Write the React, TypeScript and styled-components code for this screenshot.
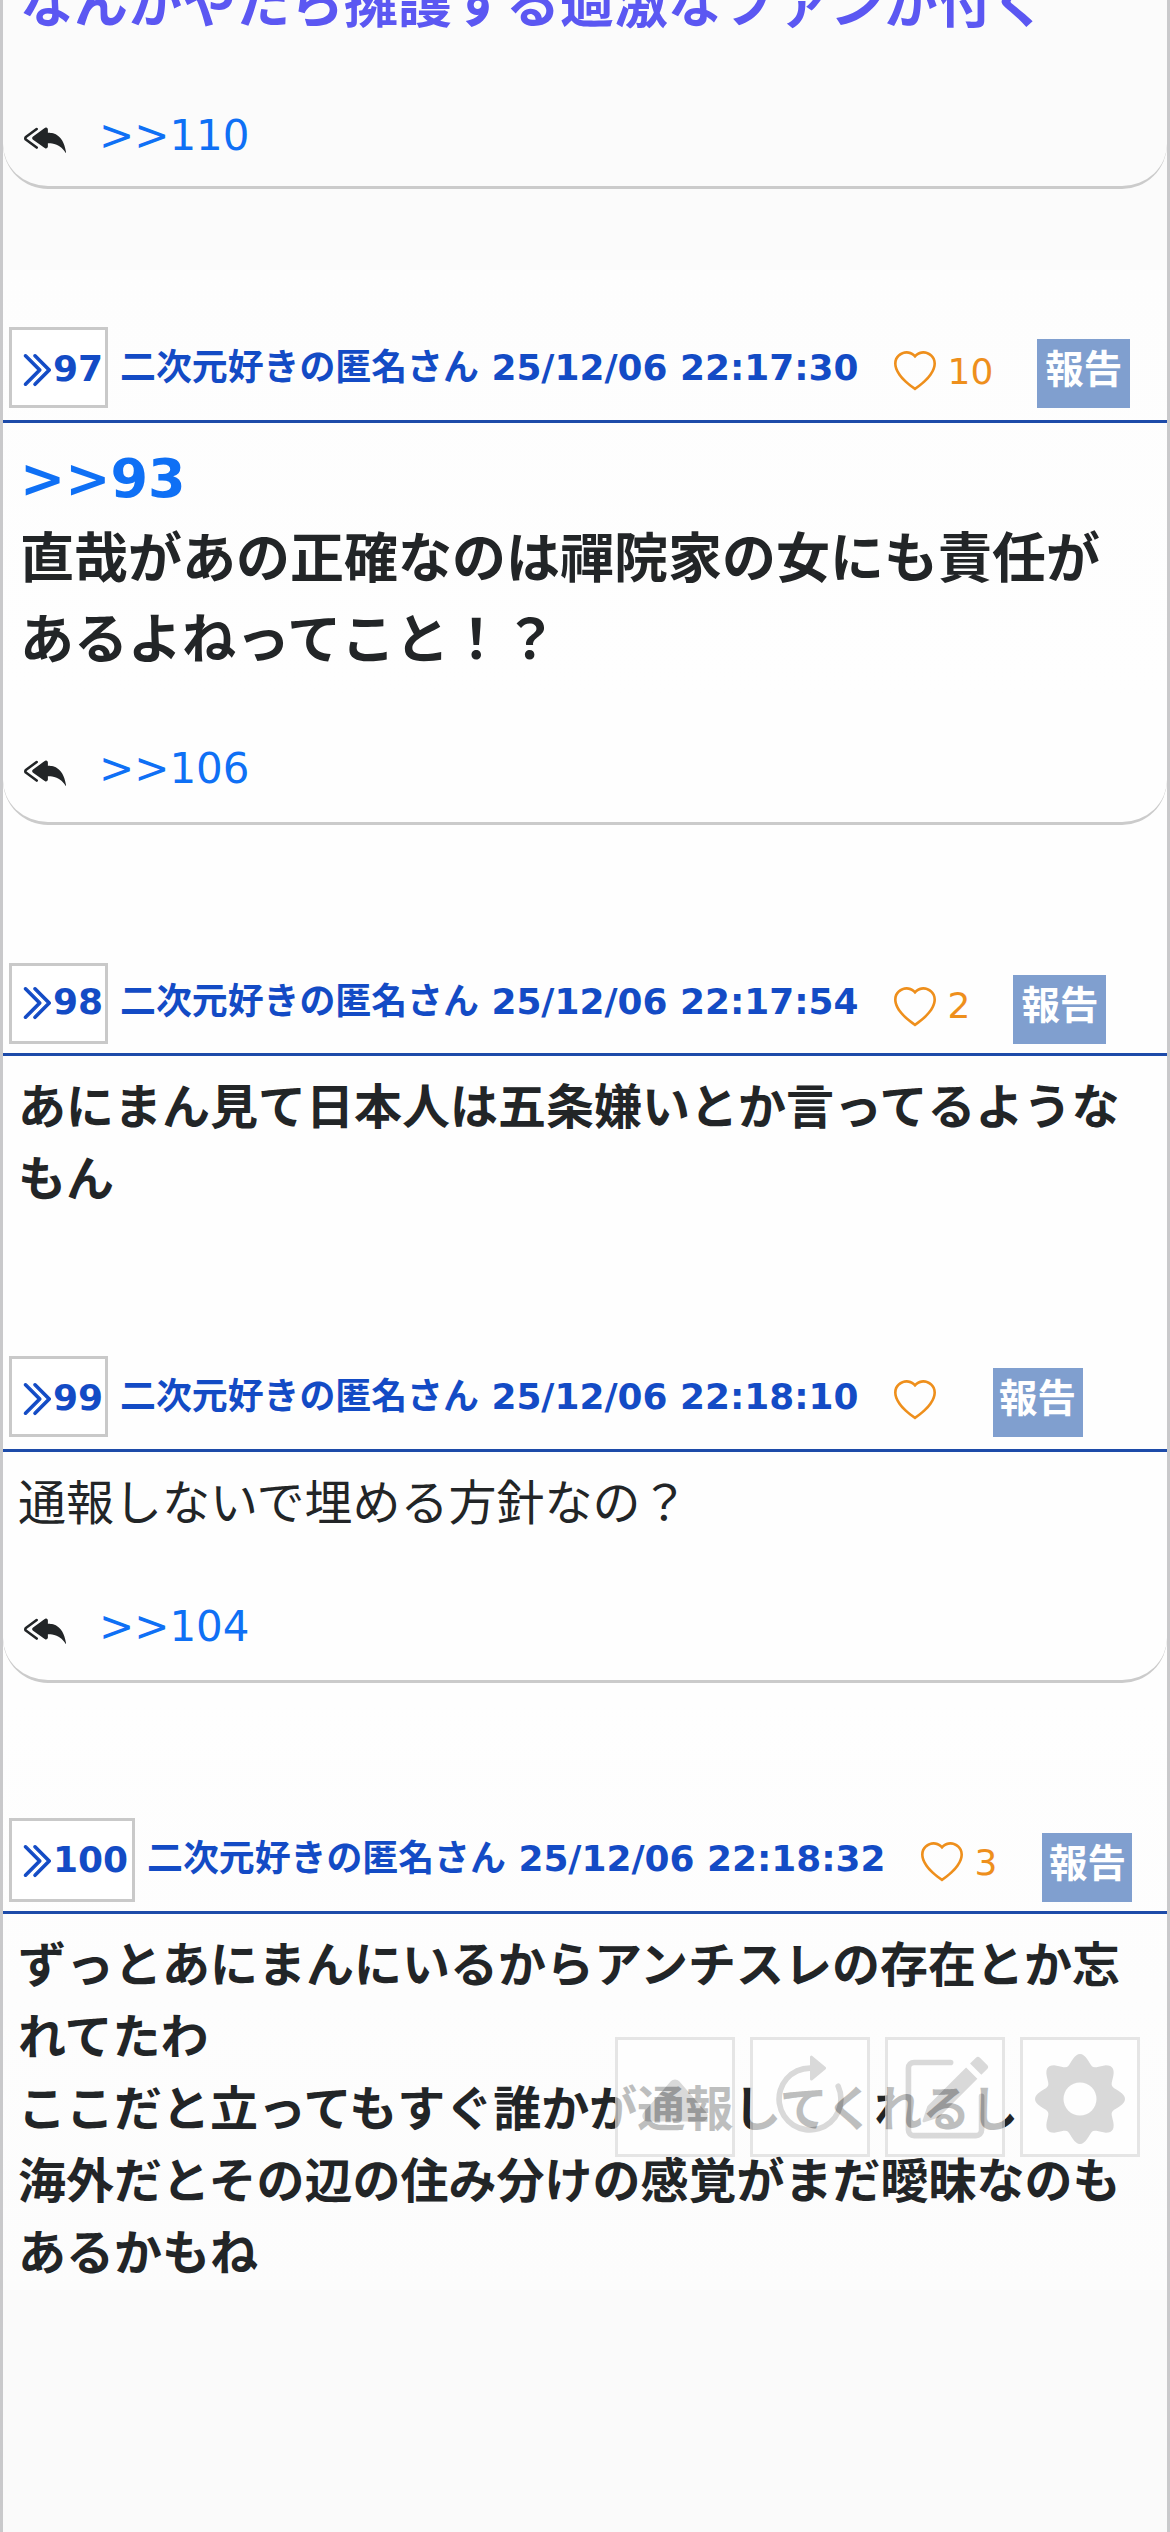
import React from "react";
import styled, { createGlobalStyle } from "styled-components";
import {
  BsArrowClockwise,
  BsCaretUpFill,
  BsChevronDoubleRight,
  BsHeart,
  BsPencilSquare,
  BsReplyAllFill,
} from "react-icons/bs";

const GlobalStyle = createGlobalStyle`
  *, *::before, *::after { box-sizing: border-box; }
  body {
    margin: 0;
    background: #fdfdfd;
    color: #222527;
    font-family: "DejaVu Sans", "Noto Sans CJK JP", sans-serif;
  }
`;

const Page = styled.main`
  position: relative;
  width: 1170px;
  height: 2532px;
  overflow: hidden;
  border: solid #c9c9cb;
  border-width: 0 3px;
  background: linear-gradient(#fbfbfb 0, #fbfbfb 270px, #fdfdfd 270px, #fefefe 700px, #fefefe 1700px, #fcfcfc 2290px, #fafafa 2290px);
`;

const Card = styled.article<{ $gap?: number; $closed?: boolean; $foot?: number }>`
  margin-top: ${(p) => p.$gap ?? 0}px;
  padding-bottom: ${(p) => p.$foot ?? 0}px;
  ${(p) => p.$closed && "border-bottom: 3px solid #cbcbcb; border-radius: 0 0 45px 45px;"}
`;

const Header = styled.header<{ $inset: number }>`
  display: flex;
  align-items: flex-end;
  height: 99px;
  padding: 0 0 ${(p) => p.$inset}px 6px;
  border-bottom: 3px solid #1d4ba9;
`;

const NumberBox = styled.a<{ $tall?: boolean; $lift: number }>`
  display: flex;
  flex: none;
  align-items: flex-start;
  width: ${(p) => (p.$tall ? 126 : 99)}px;
  height: ${(p) => (p.$tall ? 84 : 81)}px;
  padding: ${(p) => p.$lift}px 0 0 4px;
  border: 3px solid #c9c9c9;
  background: #fff;
  color: #134bc5;
  font-size: 36px;
  font-weight: 700;
  line-height: 36px;

  svg {
    flex: none;
    margin-right: -1px;
    stroke: currentColor;
    stroke-width: 0.5;
  }
`;

const Byline = styled.span<{ $drop: number }>`
  margin: 0 0 ${(p) => p.$drop}px 12px;
  color: #134bc5;
  font-size: 35.9px;
  font-weight: 700;
  line-height: 54px;
  white-space: nowrap;
`;

const Like = styled.button<{ $drop: number; $raise: number }>`
  display: flex;
  align-items: center;
  gap: 12px;
  margin: 0 0 ${(p) => p.$drop}px 35px;
  padding: 0;
  border: 0;
  background: none;
  color: #ee8f1c;
  font: 36px / 42px "DejaVu Sans", sans-serif;

  span {
    padding-bottom: ${(p) => p.$raise}px;
    margin-top: -${(p) => p.$raise}px;
  }
`;

const Report = styled.button<{ $space: number; $wide?: boolean }>`
  width: ${(p) => (p.$wide ? 93 : 90)}px;
  height: 69px;
  margin-left: ${(p) => p.$space}px;
  padding: 0 0 8px;
  border: 0;
  background: #809fcf;
  color: #fff;
  font: 700 38.5px / 58px "DejaVu Sans", "Noto Sans CJK JP", sans-serif;
  white-space: nowrap;
`;

const Message = styled.p<{ $large?: boolean; $bold?: boolean; $accent?: boolean }>`
  margin: 0;
  padding: ${(p) => (p.$large ? "15px 15px 0 17px" : "15px 15px 0")};
  font-size: ${(p) => (p.$large ? 54 : 48)}px;
  line-height: 1.5;
  font-weight: ${(p) => (p.$bold ? 700 : 400)};
  ${(p) => p.$accent && "color: #5b57f2; margin-top: -51px;"}
`;

const Anchor = styled.a`
  color: #0f70f5;
`;

const Replies = styled.div<{ $gap: number }>`
  display: flex;
  align-items: center;
  gap: 33px;
  height: 63px;
  margin-top: ${(p) => p.$gap}px;
  padding-left: 21px;
  font-size: 42px;
  line-height: 63px;

  svg {
    margin-top: 5px;
  }
`;

const Tools = styled.nav`
  position: absolute;
  top: 2037px;
  right: 27px;
  display: flex;
  gap: 15px;
  opacity: 0.7;
`;

const Tool = styled.button`
  display: flex;
  justify-content: center;
  width: 120px;
  height: 120px;
  padding: 14px 0 0;
  border: 3px solid #dcdcdc;
  background: #fff;
  color: #cbcbcb;

  svg {
    flex: none;
  }
`;

interface PostProps {
  no: number;
  time: string;
  likes?: number;
  gap?: number;
  inset: number;
  reportSpace: number;
  wideReport?: boolean;
  closed?: boolean;
  foot?: number;
  children: React.ReactNode;
}

function Post({ no, time, likes, gap, inset, reportSpace, wideReport, closed, foot, children }: PostProps) {
  const shift = 12 - inset;
  const tight = inset === 9 && no < 100;
  return (
    <Card $gap={gap} $closed={closed} $foot={foot}>
      <Header $inset={inset}>
        <NumberBox $tall={no > 99} $lift={tight ? 18 : 21}>
          <BsChevronDoubleRight size={38} />
          {no}
        </NumberBox>
        <Byline $drop={13 + shift - (tight ? 1 : 0)}>二次元好きの匿名さん {time}</Byline>
        <Like $drop={tight ? 15 : 15 + shift} $raise={tight ? 2 : 0}>
          <BsHeart size={42} />
          {likes !== undefined && <span>{likes}</span>}
        </Like>
        <Report $space={reportSpace} $wide={wideReport}>報告</Report>
      </Header>
      {children}
    </Card>
  );
}

function ReplyLink({ to, gap }: { to: number; gap: number }) {
  return (
    <Replies $gap={gap}>
      <BsReplyAllFill size={42} />
      <Anchor>&gt;&gt;{to}</Anchor>
    </Replies>
  );
}

// Outline of an eight-lobed cog, traced as a radius that swells once per lobe.
const cogOutline =
  Array.from({ length: 144 }, (_, i) => {
    const a = (i / 144) * Math.PI * 2;
    const r = 39.8 + 5.2 * Math.cos(8 * a);
    return `${i ? "L" : "M"}${(45 + r * Math.cos(a)).toFixed(2)} ${(45 + r * Math.sin(a)).toFixed(2)}`;
  }).join("") + "Z";

function Cog() {
  return (
    <svg width="90" height="90" viewBox="0 0 90 90" fill="currentColor" fillRule="evenodd">
      <path d={`${cogOutline}M45 28.5a16.5 16.5 0 1 0 0 33a16.5 16.5 0 1 0 0-33Z`} />
    </svg>
  );
}

export default function App() {
  return (
    <>
      <GlobalStyle />
      <Page>
        <Card $closed $foot={19}>
          <Message $large $bold $accent>なんかやたら擁護する過激なファンが付く</Message>
          <ReplyLink to={110} gap={59} />
        </Card>

        <Post no={97} time="25/12/06 22:17:30" likes={10} gap={135} inset={12} reportSpace={44} wideReport closed foot={22}>
          <Message $large $bold>
            <Anchor>&gt;&gt;93</Anchor>
            <br />
            直哉があの正確なのは禪院家の女にも責任があるよねってこと！？
          </Message>
          <ReplyLink to={106} gap={56} />
        </Post>

        <Post no={98} time="25/12/06 22:17:54" likes={2} gap={132} inset={9} reportSpace={43} wideReport foot={138}>
          <Message $bold>あにまん見て日本人は五条嫌いとか言ってるようなもん</Message>
        </Post>

        <Post no={99} time="25/12/06 22:18:10" inset={12} reportSpace={57} closed foot={22}>
          <Message>通報しないで埋める方針なの？</Message>
          <ReplyLink to={104} gap={56} />
        </Post>

        <Post no={100} time="25/12/06 22:18:32" likes={3} gap={132} inset={9} reportSpace={45}>
          <Message $bold>
            ずっとあにまんにいるからアンチスレの存在とか忘れてたわ
            <br />
            ここだと立ってもすぐ誰かが通報してくれるし
            <br />
            海外だとその辺の住み分けの感覚がまだ曖昧なのもあるかもね
          </Message>
        </Post>

        <Tools>
          <Tool aria-label="上へ"><BsCaretUpFill size={90} /></Tool>
          <Tool aria-label="更新"><BsArrowClockwise size={90} /></Tool>
          <Tool aria-label="書き込む"><BsPencilSquare size={90} /></Tool>
          <Tool aria-label="設定"><Cog /></Tool>
        </Tools>
      </Page>
    </>
  );
}
